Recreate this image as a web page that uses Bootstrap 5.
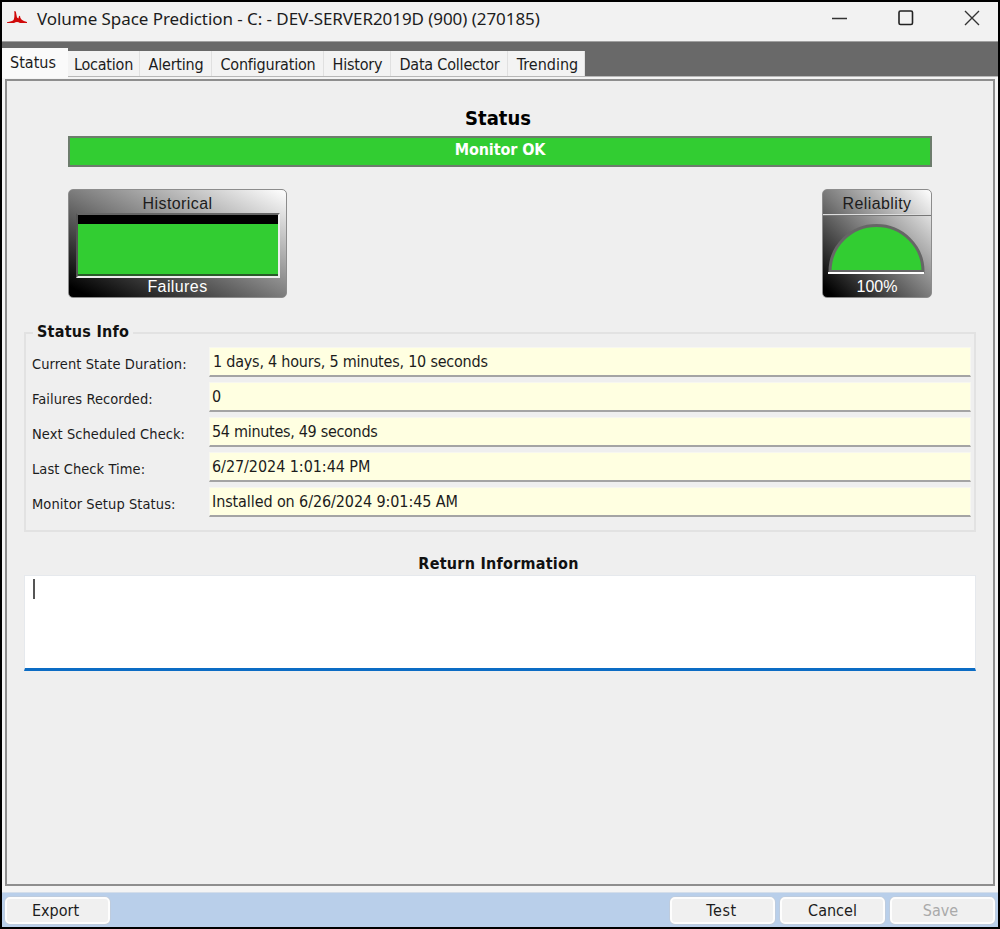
<!DOCTYPE html>
<html lang="en">
<head>
<meta charset="utf-8">
<meta name="viewport" content="width=device-width, initial-scale=1">
<title>Volume Space Prediction</title>
<link href="https://cdn.jsdelivr.net/npm/bootstrap@5.3.0/dist/css/bootstrap.min.css" rel="stylesheet">
<style>
body{font-family:"DejaVu Sans Condensed","DejaVu Sans",sans-serif;font-size:16px;line-height:20px;color:#1c1c1c}
.win{width:1000px;height:929px;border:2px solid #000;background:#f4f4f4}
.titlebar{height:39px;background:#f2f2f2;padding:0 18px 0 5px}
.caption-text{font-family:"Noto Sans","Open Sans",sans-serif;font-size:17px;letter-spacing:-.06px;margin:-5px 0 0 8px;white-space:nowrap}
.winctl{gap:50px;margin-top:-7px}
.tabstrip{height:36px;background:#696969;border-top:1px solid #a0a0a0;border-bottom:1px solid #b8b8b8}
.tabstrip .tab-btn{height:25px;background:#f3f3f3;border-right:1px solid #e0e0e0;padding:4px 0 0 1px;text-align:center;white-space:nowrap;letter-spacing:-.2px;color:#1c1c1c}
.tabstrip .tab-btn.active{height:30px;background:#fafafa;border-right:0;padding:5px 4px 0 0;letter-spacing:0;margin-bottom:-2px}
.pane{height:807px;margin:2px 3px 0;border:2px solid #8e8e8e;background:#efefef;padding:25px 17px 0}
.heading{font-size:20px;line-height:24px;color:#000}
.okbar{height:31px;margin:6px 44px 0;background:#32cd32;border:2px solid #6c7c6c;line-height:23px;letter-spacing:-.1px}
.gauges{margin:22px 44px 0}
.gauge{height:109px;border:1px solid #8c8c8c;border-radius:5px;font-family:"Liberation Sans",Arial,sans-serif;letter-spacing:.4px;text-align:center;overflow:hidden}
.hist,.rel{background:linear-gradient(to top right,#000 5%,#7c7c7c 50%,#fafafa 98%)}
.hist{width:219px}
.rel{width:110px}
.hist-plot{height:65px;margin:-1px 6px 0 7px;border:2px solid #666;border-color:#666 #eee #eee #555;background:#32cd32;box-shadow:inset 0 -2px #2a5a2a}
.hist-plot div{height:9px;background:#000}
.gauge-top{height:24px;padding-top:4px;line-height:20px}
.info{height:200px;margin-top:34px;border:2px solid #e2e2e2;padding:13px 3px 0 6px}
.info-title{width:fit-content;letter-spacing:.25px;background:#efefef;color:#111;margin:-25px 0 5px 1px;padding:0 4px}
.info-row{height:35px}
.info-row label{width:177px;font-size:14.5px;letter-spacing:.08px;padding-top:7px;white-space:nowrap}
.info-row output{height:30px;background:#ffffe1;border:1px solid #f7f7f0;border-bottom:2px solid #a4a4a4;padding:4px 2px;letter-spacing:-.13px;white-space:nowrap}
.ret-title{margin-top:22px;letter-spacing:.25px;color:#111;padding-right:3px}
.ret-box{height:96px;margin-top:1px;background:#fff;border:1px solid #e6e9ed;border-bottom:3px solid #0c6cc4;padding:3px 8px}
.caret{width:2px;height:20px;background:#555}
.footer-bar{height:35px;margin-top:6px;background:#b9cfea;padding:4px 3px 0;border-top:1px solid #d4deea;gap:5px}
.footer-bar .cmd{width:105px;height:27px;padding:1px 2px 0 0;border:2px solid #fdfdfd;border-radius:5px;background:#f0f0f0;color:#1c1c1c;font-size:16px;line-height:20px;box-shadow:0 0 0 .5px #c4cad2}
.footer-bar .cmd:disabled{color:#aaa;opacity:1}
</style>
</head>
<body>
<div class="win d-flex flex-column overflow-hidden">
  <header class="titlebar d-flex align-items-center flex-shrink-0">
    <svg width="22" height="14" viewBox="0 0 22 14" style="margin-top:-10px"><path d="M0 12.200Q5 11.500 6.500 10Q7.800 7.500 7.300 1L8.800 1.500L10 7.500L11.500 8.500Q11.800 5 13 6Q13 10.500 20 12V13H13Q10 11 7 13H0Z" fill="#d00a0a"/></svg>
    <div class="caption-text">Volume Space Prediction - C: - DEV-SERVER2019D (900) (270185)</div>
    <div class="winctl d-flex ms-auto align-items-center">
      <svg width="16" height="18" fill="none" stroke="#333" stroke-width="1.5"><path d="M0 9.500h15"/></svg>
      <svg width="16" height="18" fill="none" stroke="#222" stroke-width="1.6"><rect x="1" y="2" width="13.500" height="13.500" rx="1.500"/></svg>
      <svg width="16" height="18" fill="none" stroke="#333" stroke-width="1.4"><path d="M1 2l14 14M15 2L1 16"/></svg>
    </div>
  </header>
  <nav class="tabstrip d-flex align-items-end flex-shrink-0">
    <div class="tab-btn active" style="width:66px">Status</div>
    <div class="tab-btn" style="width:72px;padding-left:0">Location</div>
    <div class="tab-btn" style="width:72px">Alerting</div>
    <div class="tab-btn" style="width:112px">Configuration</div>
    <div class="tab-btn" style="width:67px">History</div>
    <div class="tab-btn" style="width:117px">Data Collector</div>
    <div class="tab-btn" style="width:77px;letter-spacing:0;padding-left:3px">Trending</div>
  </nav>
  <main class="pane flex-shrink-0">
    <h1 class="heading text-center fw-bold mb-0 pe-1">Status</h1>
    <div class="okbar text-center text-white fw-bold">Monitor OK</div>
    <div class="gauges d-flex justify-content-between">
      <div class="gauge hist">
        <div class="gauge-top">Historical</div>
        <div class="hist-plot"><div></div></div>
        <div class="text-white" style="margin-top:-1px">Failures</div>
      </div>
      <div class="gauge rel">
        <div class="gauge-top">Reliablity</div>
        <svg class="d-block" width="108" height="62"><path d="M0 .5h108" stroke="#ddd"/><path d="M0 1.500h108" stroke="#777"/><path d="M7 57.500A46.500 46 0 0 1 100 57.500Z" fill="#32cd32" stroke="#666" stroke-width="3"/><path d="M5 59h96" stroke="#fff" stroke-width="2"/></svg>
        <div class="text-white" style="letter-spacing:0;margin-top:1px">100%</div>
      </div>
    </div>
    <section class="info">
      <div class="info-title fw-bold">Status Info</div>
      <div class="info-row d-flex"><label>Current State Duration:</label><output class="flex-fill" style="letter-spacing:-.22px;padding-left:3px">1 days, 4 hours, 5 minutes, 10 seconds</output></div>
      <div class="info-row d-flex"><label>Failures Recorded:</label><output class="flex-fill">0</output></div>
      <div class="info-row d-flex"><label>Next Scheduled Check:</label><output class="flex-fill" style="letter-spacing:-.3px">54 minutes, 49 seconds</output></div>
      <div class="info-row d-flex"><label>Last Check Time:</label><output class="flex-fill" style="letter-spacing:-.06px">6/27/2024 1:01:44 PM</output></div>
      <div class="info-row d-flex"><label>Monitor Setup Status:</label><output class="flex-fill" style="letter-spacing:-.1px">Installed on 6/26/2024 9:01:45 AM</output></div>
    </section>
    <div class="ret-title text-center fw-bold">Return Information</div>
    <div class="ret-box"><div class="caret"></div></div>
  </main>
  <footer class="footer-bar d-flex flex-shrink-0">
    <button class="btn cmd me-auto" style="padding-right:4px">Export</button>
    <button class="btn cmd" style="letter-spacing:.6px">Test</button>
    <button class="btn cmd" style="padding-right:0">Cancel</button>
    <button class="btn cmd" disabled style="padding-right:4px">Save</button>
  </footer>
</div>
<script src="https://cdn.jsdelivr.net/npm/bootstrap@5.3.0/dist/js/bootstrap.bundle.min.js"></script>
</body>
</html>
